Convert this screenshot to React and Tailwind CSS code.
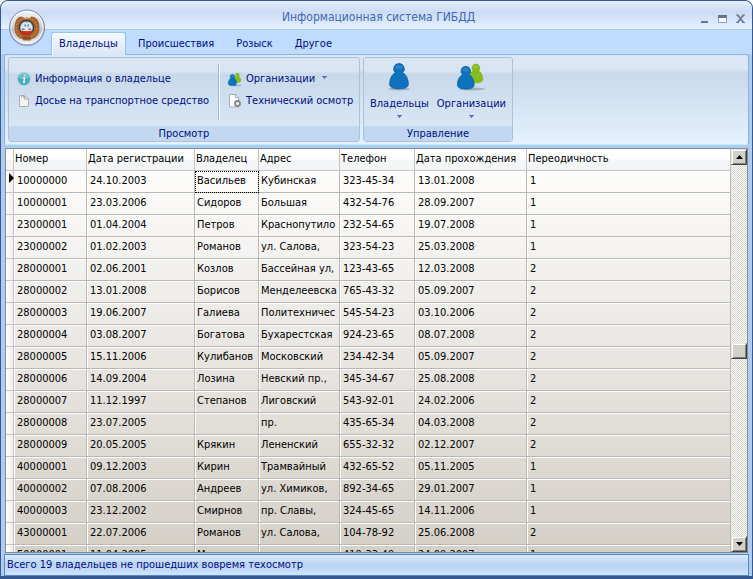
import React from 'react';

const COLUMNS = ['Номер', 'Дата регистрации', 'Владелец', 'Адрес', 'Телефон', 'Дата прохождения', 'Переодичность'];

const ROWS = [
  ['10000000', '24.10.2003', 'Васильев', 'Кубинская', '323-45-34', '13.01.2008', '1'],
  ['10000001', '23.03.2006', 'Сидоров', 'Большая', '432-54-76', '28.09.2007', '1'],
  ['23000001', '01.04.2004', 'Петров', 'Краснопутило', '232-54-65', '19.07.2008', '1'],
  ['23000002', '01.02.2003', 'Романов', 'ул. Салова,', '323-54-23', '25.03.2008', '1'],
  ['28000001', '02.06.2001', 'Козлов', 'Бассейная ул,', '123-43-65', '12.03.2008', '2'],
  ['28000002', '13.01.2008', 'Борисов', 'Менделеевска', '765-43-32', '05.09.2007', '2'],
  ['28000003', '19.06.2007', 'Галиева', 'Политехничес', '545-54-23', '03.10.2006', '2'],
  ['28000004', '03.08.2007', 'Богатова', 'Бухарестская', '924-23-65', '08.07.2008', '2'],
  ['28000005', '15.11.2006', 'Кулибанов', 'Московский', '234-42-34', '05.09.2007', '2'],
  ['28000006', '14.09.2004', 'Лозина', 'Невский пр.,', '345-34-67', '25.08.2008', '2'],
  ['28000007', '11.12.1997', 'Степанов', 'Лиговский', '543-92-01', '24.02.2006', '2'],
  ['28000008', '23.07.2005', '', 'пр.', '435-65-34', '04.03.2008', '2'],
  ['28000009', '20.05.2005', 'Крякин', 'Лененский', '655-32-32', '02.12.2007', '2'],
  ['40000001', '09.12.2003', 'Кирин', 'Трамвайный', '432-65-52', '05.11.2005', '1'],
  ['40000002', '07.08.2006', 'Андреев', 'ул. Химиков,', '892-34-65', '29.01.2007', '1'],
  ['40000003', '23.12.2002', 'Смирнов', 'пр. Славы,', '324-45-65', '14.11.2006', '1'],
  ['43000001', '22.07.2006', 'Романов', 'ул. Салова,', '104-78-92', '25.06.2008', '2'],
  ['50000001', '11.04.2005', 'Маслов', '', '419-33-49', '24.09.2007', '1'],
];

function Emblem() {
  return (
    <svg viewBox="0 0 38 38" className="size-[38px]" aria-hidden="true">
      <defs>
        <linearGradient id="orb" x1="0" y1="0" x2="0" y2="1">
          <stop offset="0" stopColor="#f4f6f9" />
          <stop offset="0.48" stopColor="#cbd2dd" />
          <stop offset="0.55" stopColor="#b4bdcb" />
          <stop offset="1" stopColor="#eef3fb" />
        </linearGradient>
      </defs>
      <circle cx="19" cy="19.500" r="18" fill="#8fa0ba" opacity="0.5" />
      <circle cx="19" cy="18.500" r="17.500" fill="url(#orb)" stroke="#7f8ba0" />
      <circle cx="19" cy="18.500" r="16" fill="none" stroke="#fff" strokeOpacity="0.7" />
      <path
        d="M14 7.500l-3 .5-2.500 2.500-1.500 3.500-.5 4.500.5 5 2 3.500 3 2.500 2.500.5 1 1.500h7l1-1.500 2.500-.5 3-2.500 2-3.500.5-5-.5-4.500-1.500-3.500L26 8l-3-.5-1.500 2h-6z"
        fill="#a3632a"
      />
      <circle cx="18.500" cy="19" r="10.300" fill="none" stroke="#cf8838" strokeWidth="1.600" strokeDasharray="1.600 1.600" />
      <path d="M15 27.500h7l1 2-4.500 1-4.500-1z" fill="#8a4c1c" />
      <circle cx="18.500" cy="18.500" r="7.600" fill="#1d2a44" />
      <circle cx="18.500" cy="18.500" r="6.600" fill="#7fa3c4" />
      <path d="M12.500 18l2-4 2.500-1 1.500 1 1.500-1 2.500 1 2 4-.5 4h-11z" fill="#dfe4e8" />
      <path d="M16.500 15.500h1.500v2h-1.500zM19.500 15.500H21v2h-1.500zM14 19.500h2.500V21H14zM20.500 19.500H23V21h-2.500z" fill="#61788f" />
      <path d="M12.500 21.500q6 1.500 12 0l-1.500 3q-4.500 2.500-9 0z" fill="#e0241c" />
    </svg>
  );
}

function PersonShape({ color, edge }) {
  return (
    <>
      <path
        d="M12 1.500a5.300 5.300 0 0 0-3.500 9.300C5 12 2.700 17 2.700 22c0 3.300 3.800 4.800 9.300 4.800s9.300-1.500 9.300-4.800c0-5-2.300-10-5.800-11.200A5.300 5.300 0 0 0 12 1.500z"
        fill={color}
        stroke={edge}
        strokeWidth="0.8"
      />
      <path d="M8 6a4.200 4.200 0 0 1 8 0q-4 2.500-8 0z" fill="#fff" opacity="0.12" />
    </>
  );
}

function OwnerIcon() {
  return (
    <svg viewBox="0 0 32 30" className="h-[30px] w-8" aria-hidden="true">
      <ellipse cx="16" cy="27" rx="11" ry="1.500" fill="#7d8fa0" opacity="0.6" />
      <g transform="translate(4 0)">
        <PersonShape color="#0f72bd" edge="#0b5c9e" />
      </g>
    </svg>
  );
}

function PeopleIcon({ small }) {
  return (
    <svg viewBox="0 0 32 30" className={small ? 'h-[15px] w-4' : 'h-[30px] w-8'} aria-hidden="true">
      <ellipse cx="17" cy="27" rx="13" ry="1.500" fill="#7d8fa0" opacity="0.6" />
      <g transform="translate(12 1) scale(0.74)">
        <PersonShape color="#86bd1c" edge="#6fa312" />
      </g>
      <g transform="translate(0 3) scale(0.9)">
        <PersonShape color="#0f72bd" edge="#0b5c9e" />
      </g>
    </svg>
  );
}

function InfoIcon() {
  return (
    <svg viewBox="0 0 14 14" className="size-[14px]" aria-hidden="true">
      <circle cx="7" cy="7" r="6.300" fill="#45abb8" stroke="#8ccbd6" />
      <path d="M2 6a5 5 0 0 1 10 0q-5 2-10 0z" fill="#fff" opacity="0.25" />
      <path d="M7.300 3.300h1.200M6.300 6h1.300L6.800 10.300H8" stroke="#fff" strokeWidth="1.300" fill="none" />
    </svg>
  );
}

function DocIcon({ gear }) {
  return (
    <svg viewBox="0 0 14 14" className="size-[14px]" aria-hidden="true">
      {gear ? (
        <>
          <path d="M1.500 .5h6l3 3v9.500h-9z" fill="#fafafa" stroke="#a9adb3" />
          <path d="M7.500 .5v3h3" fill="#e3e5e8" stroke="#a9adb3" />
          <circle cx="9.500" cy="9.500" r="2.500" fill="#f4f4f4" stroke="#85898f" strokeWidth="1.800" />
        </>
      ) : (
        <>
          <path d="M2.500 1.500h5l4 3.500v7.500h-9z" fill="#f4f3f1" stroke="#adb0b4" />
          <path d="M4.500 1v2.500M6.500 1v2.500M7.500 2v3h4" fill="none" stroke="#a3a6ab" />
        </>
      )}
    </svg>
  );
}

function Caret() {
  return (
    <svg viewBox="0 0 5 3" className="h-[3px] w-[5px]" shapeRendering="crispEdges" aria-hidden="true">
      <path d="M0 0h5v1H4v1H3v1H2V2H1V1H0z" fill="#5a7db0" />
    </svg>
  );
}

function SmallCommand({ icon, label, caret }) {
  return (
    <button type="button" className="flex h-[22px] items-center gap-[3px] whitespace-nowrap">
      <span className="flex w-4 justify-center">{icon}</span>
      <span>{label}</span>
      {caret && (
        <span className="ml-1 pb-1">
          <Caret />
        </span>
      )}
    </button>
  );
}

function LargeCommand({ icon, label }) {
  return (
    <button type="button" className="flex flex-col items-center whitespace-nowrap">
      {icon}
      <span className="mt-1 leading-4">{label}</span>
      <span className="mt-[3px] flex">
        <Caret />
      </span>
    </button>
  );
}

function RibbonGroup({ title, children }) {
  return (
    <section className="flex flex-col overflow-hidden rounded-[3px] border border-[#a9c3de] bg-linear-to-b from-[#d9e5f2] from-15% via-[#c8d9ea] via-20% to-[#dceaf8]">
      <div className="flex h-[68px]">{children}</div>
      <h2 className="h-[15px] bg-[#c1d8f0] text-center leading-[15px]">{title}</h2>
    </section>
  );
}

function ScrollButton({ label, children }) {
  return (
    <button
      type="button"
      aria-label={label}
      className="flex h-4 shrink-0 items-center justify-center border border-t-[#e8e6e0] border-r-[#404040] border-b-[#404040] border-l-[#e8e6e0] bg-[#d4d0c8] shadow-[inset_1px_1px_#fff,inset_-1px_-1px_#808080]"
    >
      {children}
    </button>
  );
}

function ScrollBar() {
  return (
    <div className="flex w-4 shrink-0 flex-col bg-[conic-gradient(#fff_25%,#d8d5ce_0_50%,#fff_0_75%,#d8d5ce_0)] bg-[length:2px_2px]">
      <ScrollButton label="Вверх">
        <svg viewBox="0 0 7 4" className="h-1 w-[7px]" aria-hidden="true"><path d="M0 4h7L3.500 0z" /></svg>
      </ScrollButton>
      <div className="flex flex-1 flex-col justify-center">
        <ScrollButton label="Прокрутка" />
      </div>
      <ScrollButton label="Вниз">
        <svg viewBox="0 0 7 4" className="h-1 w-[7px]" aria-hidden="true"><path d="M0 0h7L3.500 4z" /></svg>
      </ScrollButton>
    </div>
  );
}

function DataTable() {
  return (
    <table className="w-full table-fixed border-separate border-spacing-0 text-left text-black">
      <colgroup>
        <col className="w-2" />
        <col className="w-[73px]" />
        <col className="w-[108px]" />
        <col className="w-16" />
        <col className="w-[81px]" />
        <col className="w-[75px]" />
        <col className="w-28" />
        <col />
      </colgroup>
      <thead>
        <tr className="h-[22px] bg-linear-to-b from-white from-45% via-[#f5f6f8] via-50% to-[#f3f4f6]">
          <th className="border-r border-b border-[#c4c4c4] p-0" aria-label="Текущая запись" />
          {COLUMNS.map((name) => (
            <th key={name} scope="col" className="overflow-hidden border-r border-b border-[#c4c4c4] p-0 pl-px font-normal whitespace-nowrap">
              {name}
            </th>
          ))}
        </tr>
      </thead>
      <tbody>
        {ROWS.map((row, r) => (
          <tr key={row[0]} className="h-[22px]">
            <td className="border-r border-b border-[#c4c4c4] bg-linear-to-r from-white to-[#eeeef2] p-0 align-top">
              {r === 0 && (
                <svg viewBox="0 0 5 10" className="mt-[2px] ml-[3px] h-[10px] w-[5px]" aria-hidden="true"><path d="M0 0l5 5-5 5z" /></svg>
              )}
            </td>
            {row.map((value, c) => (
              <td
                key={c}
                className={
                  'overflow-hidden border-r border-b border-[#b9b8b6] p-0 whitespace-nowrap shadow-[inset_1px_1px_#fff]' +
                  (c === 2 || c === 3 ? ' pl-[2px]' : ' pl-[3px]') +
                  (r === 0 && c === 2 ? ' outline-1 -outline-offset-1 outline-black outline-dotted' : '')
                }
              >
                {value}
              </td>
            ))}
          </tr>
        ))}
      </tbody>
    </table>
  );
}

const TABS = ['Происшествия', 'Розыск', 'Другое'];

export default function App() {
  return (
    <div className="h-screen bg-white">
      <div className="relative flex h-full flex-col overflow-hidden rounded-t-lg border border-b-[3px] border-[#34588f] bg-[#afcbee] font-['DejaVu_Sans_Condensed','Noto_Sans',sans-serif] text-[11px] text-[#000f80]">
        <header className="flex h-[29px] shrink-0 items-center border-b border-[#a8c6f0] bg-linear-to-b from-[#e4eefc] via-[#cbdcf5] via-40% to-[#e6f1ff] pt-1 pr-[2px] pl-[60px]">
          <h1 className="flex-1 text-center text-[12px] text-[#4468ae]">Информационная система ГИБДД</h1>
          <div className="flex pt-1">
            <button type="button" aria-label="Свернуть" className="flex h-4 w-[18px] items-center justify-center">
              <svg viewBox="0 0 10 10" className="size-[10px]" aria-hidden="true"><path d="M1 8h7" stroke="#66758c" strokeWidth="2" /></svg>
            </button>
            <button type="button" aria-label="Развернуть" className="flex h-4 w-[18px] items-center justify-center">
              <svg viewBox="0 0 10 10" className="size-[10px]" aria-hidden="true">
                <path d="M.5 2v6.500h8V2" fill="#f5f9ff" stroke="#8ba1c2" />
                <path d="M0 2.500h9" stroke="#66758c" strokeWidth="3" />
              </svg>
            </button>
            <button type="button" aria-label="Закрыть" className="flex h-4 w-[18px] items-center justify-center">
              <svg viewBox="0 0 10 10" className="size-[10px]" aria-hidden="true"><path d="M1.500 1l6 7.500M7.500 1l-6 7.500" stroke="#6c7e9b" strokeWidth="2" /><path d="M0 1h3M6 1h3M0 8.500h3M6 8.500h3" stroke="#6c7e9b" /></svg>
            </button>
          </div>
        </header>
        <nav className="flex h-6 shrink-0 items-end bg-[#bfdbff] pl-[50px]">
          <a href="#owners" className="z-10 -mb-px flex h-[23px] w-[75px] items-center justify-center rounded-t-[3px] border border-b-0 border-[#92c2ee] bg-linear-to-b from-[#f3f8fe] to-[#dbe7f5] shadow-[inset_1px_1px_#fff]">
            Владельцы
          </a>
          <div className="flex h-[22px] items-center gap-[22px] pt-[2px] pl-3">
            {TABS.map((tab) => (
              <a key={tab} href="#tab">{tab}</a>
            ))}
          </div>
        </nav>
        <button type="button" aria-label="Меню" className="absolute top-2 left-[7px] z-20 rounded-full">
          <Emblem />
        </button>
        <main className="flex min-h-0 flex-1 flex-col px-[3px]">
          <div className="flex shrink-0 gap-[3px] rounded-[3px] border border-[#8db2e3] border-b-[#b5f0fb] bg-linear-to-b from-[#dce7f5] from-15% via-[#c8d9ea] via-20% to-[#e5f2ff] px-[3px] py-[2px]">
            <RibbonGroup title="Просмотр">
              <div className="my-[6px] w-[210px] border-r border-[#9fb8d6] pt-1 pl-[7px] shadow-[1px_0_#f2f8ff]">
                <SmallCommand icon={<InfoIcon />} label="Информация о владельце" />
                <SmallCommand icon={<DocIcon />} label="Досье на транспортное средство" />
              </div>
              <div className="my-[6px] w-[140px] pt-1 pl-2">
                <SmallCommand icon={<PeopleIcon small />} label="Организации" caret />
                <SmallCommand icon={<DocIcon gear />} label="Технический осмотр" />
              </div>
            </RibbonGroup>
            <RibbonGroup title="Управление">
              <div className="flex gap-2 px-[6px] pt-1">
                <LargeCommand icon={<OwnerIcon />} label="Владельцы" />
                <LargeCommand icon={<PeopleIcon />} label="Организации" />
              </div>
            </RibbonGroup>
          </div>
          <div className="mx-px mt-[3px] flex min-h-0 flex-1 overflow-hidden border border-[#848c98] bg-linear-to-b from-white to-[#d4cfc7]">
            <div className="min-w-0 flex-1 overflow-hidden">
              <DataTable />
            </div>
            <ScrollBar />
          </div>
        </main>
        <footer className="mx-[3px] mt-px h-[22px] shrink-0 border border-[#5c86c0] bg-linear-to-b from-[#dbe9fc] via-[#b9d3f3] via-50% to-[#cfe3fd] pl-[2px] leading-5">
          Всего 19 владельцев не прошедших вовремя техосмотр
        </footer>
      </div>
    </div>
  );
}
